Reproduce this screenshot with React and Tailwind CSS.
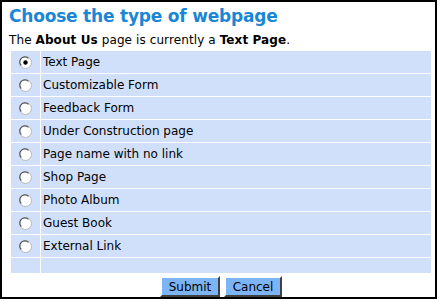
import { useState } from 'react'

const options = [
  'Text Page',
  'Customizable Form',
  'Feedback Form',
  'Under Construction page',
  'Page name with no link',
  'Shop Page',
  'Photo Album',
  'Guest Book',
  'External Link',
]

function Radio({ checked }) {
  return (
    <svg width="13" height="13" viewBox="0 0 13 13">
      <circle cx="6.5" cy="6.5" r="6" fill="#fff" stroke="#b8b8b8" />
      <path d="M2.3 9.5 A5 5 0 0 1 9.5 2.3" fill="none" stroke="#555" strokeWidth="1.2" />
      {checked && <circle cx="6.5" cy="6.5" r="2.2" fill="#000" />}
    </svg>
  )
}

export default function App() {
  const [selected, setSelected] = useState(0)

  return (
    <div className="w-[437px] h-[299px] border-2 border-black bg-white font-['DejaVu_Sans',Verdana,sans-serif] text-black">
      <h1 className="pl-[7px] pt-[3px] text-[17px] font-bold leading-[22px] tracking-[-0.2px] text-[#1a86d6]">
        Choose the type of webpage
      </h1>
      <p className="pl-[7px] pt-[5px] text-[12px] leading-[16px] tracking-[0.1px]">
        The <b>About Us</b> page is currently a <b>Text Page</b>.
      </p>

      <div className="ml-[9px] mt-[3px] w-[420px] flex flex-col gap-px">
        {options.map((o, i) => (
          <div key={o} className="flex h-[22px] gap-px">
            <div
              className="w-[29px] bg-[#d0e0fb] flex items-center justify-center cursor-pointer"
              onClick={() => setSelected(i)}
            >
              <Radio checked={selected === i} />
            </div>
            <div className="flex-1 bg-[#d0e0fb] flex items-center pl-[2px] text-[12px]">{o}</div>
          </div>
        ))}
        <div className="flex h-[15px] gap-px">
          <div className="w-[29px] bg-[#d0e0fb]" />
          <div className="flex-1 bg-[#d0e0fb]" />
        </div>
      </div>

      <div className="flex justify-center gap-[4px] mt-[3px] pl-[5px]">
        <button className="w-[60px] h-[21px] bg-[#7db4f5] text-[12px] border-2 border-t-white border-l-white border-r-[#404040] border-b-[#404040]">
          Submit
        </button>
        <button className="w-[58px] h-[21px] bg-[#7db4f5] text-[12px] border-2 border-t-white border-l-white border-r-[#404040] border-b-[#404040]">
          Cancel
        </button>
      </div>
    </div>
  )
}
